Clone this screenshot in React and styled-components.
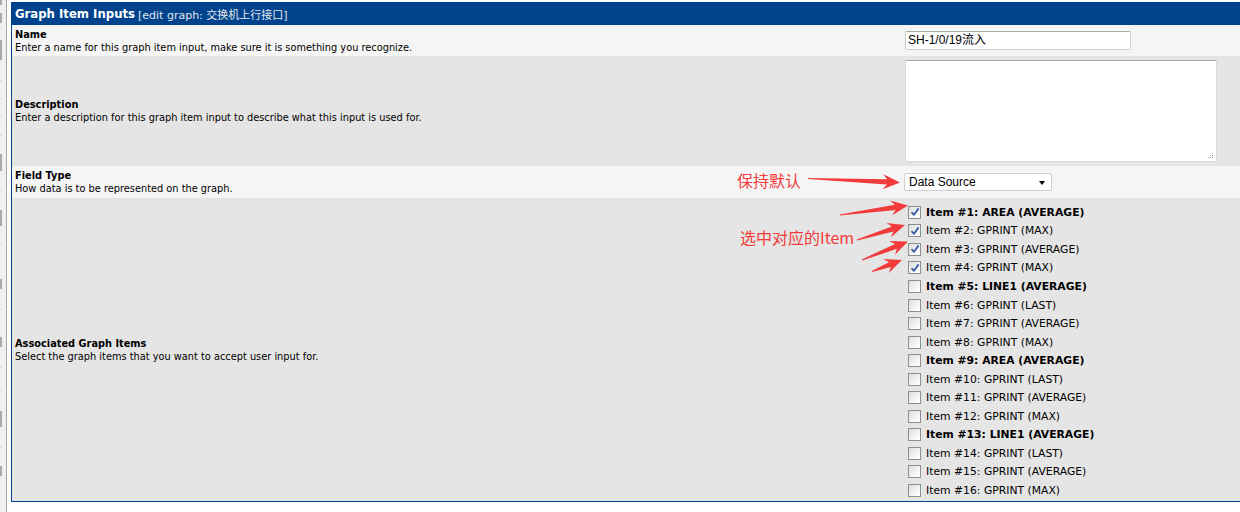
import React from "react";
import styled, { createGlobalStyle } from "styled-components";

const Global = createGlobalStyle`
  html, body { margin: 0; padding: 0; background: #ffffff; }
  body { font-family: "DejaVu Sans", "Noto Sans CJK SC", sans-serif; overflow: hidden; }
`;

const Page = styled.div`
  position: relative;
  display: flex;
  width: 1240px;
  height: 512px;
  overflow: hidden;
`;

const Sidebar = styled.div`
  width: 6px;
  flex: none;
  background: #f0f0f0;
  border-right: 1px solid #a6a6a6;
  display: flex;
  flex-direction: column;
`;

const Mark = styled.div`
  width: ${(p) => (p.$thick ? 2 : 1)}px;
  height: ${(p) => p.$h}px;
  margin-top: ${(p) => p.$gap}px;
  background: ${(p) => (p.$thick ? "#a9a9a9" : "#c4c4c4")};
`;

const Main = styled.div`
  flex: 1;
  padding: 2px 0 0 4px;
  min-width: 0;
`;

const Table = styled.div`
  border: 1px solid #00438c;
  border-right: none;
  width: calc(100% + 40px);
`;

const Header = styled.div`
  height: 22px;
  background: #00438c;
  display: flex;
  align-items: center;
  padding-left: 3px;
  font-size: 11.7px;
  color: #ffffff;
  white-space: nowrap;
`;

const HeaderTitle = styled.span`
  font-weight: bold;
`;

const HeaderSub = styled.span`
  color: #e2e6ee;
  margin-left: 3px;
  font-size: 11px;
`;

const Row = styled.div`
  display: flex;
  align-items: stretch;
  background: ${(p) => (p.$alt ? "#e5e5e5" : "#f5f5f5")};
  height: ${(p) => p.$h}px;
`;

const LeftCell = styled.div`
  width: 886px;
  flex: none;
  padding-left: 3px;
  display: flex;
  flex-direction: column;
  justify-content: center;
  font-size: 9.8px;
  line-height: 13px;
  color: #000;
`;

const FieldTitle = styled.div`
  font-weight: bold;
`;

const FieldDesc = styled.div``;

const RightCell = styled.div`
  flex: 1;
  display: flex;
  flex-direction: column;
  justify-content: ${(p) => (p.$top ? "flex-start" : "center")};
  padding-left: ${(p) => p.$pl ?? 4}px;
  padding-top: ${(p) => p.$pt ?? 0}px;
`;

const TextInput = styled.div`
  width: 222px;
  height: 17px;
  border: 1px solid #c9ced6;
  border-top-color: #a9a9a9;
  border-radius: 2px;
  background: #fff;
  font-family: "Liberation Sans", "Noto Sans CJK SC", sans-serif;
  font-size: 12px;
  line-height: 17px;
  padding-left: 2px;
  box-sizing: content-box;
  color: #000;
`;

const TextArea = styled.div`
  position: relative;
  width: 310px;
  height: 100px;
  border: 1px solid #d3d7de;
  border-top-color: #ababab;
  border-radius: 2px;
  background: #fff;
`;

const Grip = styled.svg`
  position: absolute;
  right: 2px;
  bottom: 2px;
`;

const SelectBox = styled.div`
  margin-left: -1px;
  width: 136px;
  height: 16px;
  border: 1px solid #cfcfcf;
  border-radius: 2px;
  background: #fff;
  display: flex;
  align-items: center;
  justify-content: space-between;
  padding-left: 4px;
  padding-right: 6px;
  box-sizing: content-box;
  margin-right: auto;
  font-family: "Liberation Sans", sans-serif;
  font-size: 12px;
  color: #000;
`;

const Caret = styled.span`
  width: 0;
  height: 0;
  border-left: 3.5px solid transparent;
  border-right: 3.5px solid transparent;
  border-top: 4px solid #000;
  margin-top: 2px;
`;

const ItemList = styled.div`
  display: flex;
  flex-direction: column;
`;

const Item = styled.div`
  display: flex;
  align-items: center;
  height: 18.55px;
  font-size: 10.8px;
  color: #000;
  white-space: nowrap;
`;

const Box = styled.span`
  width: 11px;
  height: 11px;
  border: 1px solid #8e8f8f;
  background: linear-gradient(135deg, #dcdcdc 0%, #f4f4f4 60%, #ffffff 100%);
  margin-left: 7px;
  display: flex;
  align-items: center;
  justify-content: center;
  flex: none;
`;

const ItemLabel = styled.span`
  margin-left: 5px;
  font-weight: ${(p) => (p.$bold ? "bold" : "normal")};
`;

const Overlay = styled.svg`
  position: absolute;
  left: 0;
  top: 0;
  pointer-events: none;
`;

const Note = styled.div`
  position: absolute;
  left: ${(p) => p.$x}px;
  top: ${(p) => p.$y}px;
  font-family: "Noto Sans CJK SC", "DejaVu Sans", sans-serif;
  font-size: 16px;
  color: #f23b3b;
  white-space: nowrap;
  line-height: 1;
`;

const marks = [
  { gap: 0, h: 5, thick: true },
  { gap: 8, h: 10, thick: true },
  { gap: 5, h: 1 },
  { gap: 11, h: 20, thick: true },
  { gap: 20, h: 1 },
  { gap: 17, h: 1 },
  { gap: 17, h: 1 },
  { gap: 18, h: 1 },
  { gap: 18, h: 17, thick: true },
  { gap: 19, h: 1 },
  { gap: 19, h: 16, thick: true },
  { gap: 18, h: 1 },
  { gap: 34, h: 10, thick: true },
  { gap: 20, h: 1 },
  { gap: 27, h: 10, thick: true },
  { gap: 20, h: 1 },
  { gap: 22, h: 1 },
  { gap: 20, h: 16, thick: true },
  { gap: 20, h: 1 },
  { gap: 18, h: 10, thick: true },
];

const items = [
  { n: 1, t: "AREA (AVERAGE)", b: true, c: true },
  { n: 2, t: "GPRINT (MAX)", c: true },
  { n: 3, t: "GPRINT (AVERAGE)", c: true },
  { n: 4, t: "GPRINT (MAX)", c: true },
  { n: 5, t: "LINE1 (AVERAGE)", b: true },
  { n: 6, t: "GPRINT (LAST)" },
  { n: 7, t: "GPRINT (AVERAGE)" },
  { n: 8, t: "GPRINT (MAX)" },
  { n: 9, t: "AREA (AVERAGE)", b: true },
  { n: 10, t: "GPRINT (LAST)" },
  { n: 11, t: "GPRINT (AVERAGE)" },
  { n: 12, t: "GPRINT (MAX)" },
  { n: 13, t: "LINE1 (AVERAGE)", b: true },
  { n: 14, t: "GPRINT (LAST)" },
  { n: 15, t: "GPRINT (AVERAGE)" },
  { n: 16, t: "GPRINT (MAX)" },
];

function arrowPoints(x1, y1, x2, y2) {
  const dx = x2 - x1;
  const dy = y2 - y1;
  const len = Math.hypot(dx, dy);
  const ux = dx / len;
  const uy = dy / len;
  const px = -uy;
  const py = ux;
  const headL = 17;
  const headW = 7.5;
  const neckW = 2.6;
  const tailW = 0.6;
  const bx = x2 - ux * headL;
  const by = y2 - uy * headL;
  const nx = x2 - ux * (headL - 4);
  const ny = y2 - uy * (headL - 4);
  const pts = [
    [x1 + px * tailW, y1 + py * tailW],
    [nx + px * neckW, ny + py * neckW],
    [bx + px * headW, by + py * headW],
    [x2, y2],
    [bx - px * headW, by - py * headW],
    [nx - px * neckW, ny - py * neckW],
    [x1 - px * tailW, y1 - py * tailW],
  ];
  return pts.map((p) => p.map((v) => v.toFixed(1)).join(",")).join(" ");
}

const arrows = [
  [808, 178.5, 900, 182.5],
  [840, 215, 908, 205.5],
  [857, 240, 905, 225],
  [862, 260, 908, 241.5],
  [872, 271.5, 902, 260],
];

function Check() {
  return (
    <svg width="10" height="10" viewBox="0 0 10 10">
      <path d="M1.5 5.2 L4 7.8 L8.6 1.4" fill="none" stroke="#3b5aa8" strokeWidth="1.8" strokeLinejoin="round" />
    </svg>
  );
}

export default function App() {
  return (
    <>
      <Global />
      <Page>
        <Sidebar>
          {marks.map((m, i) => (
            <Mark key={i} $gap={m.gap} $h={m.h} $thick={m.thick} />
          ))}
        </Sidebar>
        <Main>
          <Table>
            <Header>
              <HeaderTitle>Graph Item Inputs</HeaderTitle>
              <HeaderSub>[edit graph: 交换机上行接口]</HeaderSub>
            </Header>
            <Row $h={31}>
              <LeftCell>
                <FieldTitle>Name</FieldTitle>
                <FieldDesc>Enter a name for this graph item input, make sure it is something you recognize.</FieldDesc>
              </LeftCell>
              <RightCell>
                <TextInput>SH-1/0/19流入</TextInput>
              </RightCell>
            </Row>
            <Row $h={110} $alt>
              <LeftCell>
                <FieldTitle>Description</FieldTitle>
                <FieldDesc>Enter a description for this graph item input to describe what this input is used for.</FieldDesc>
              </LeftCell>
              <RightCell>
                <TextArea>
                  <Grip width="7" height="7" viewBox="0 0 7 7">
                    <rect x="5" y="1" width="1" height="1" fill="#9a9a9a" />
                    <rect x="3" y="3" width="1" height="1" fill="#9a9a9a" />
                    <rect x="5" y="3" width="1" height="1" fill="#9a9a9a" />
                    <rect x="1" y="5" width="1" height="1" fill="#9a9a9a" />
                    <rect x="3" y="5" width="1" height="1" fill="#9a9a9a" />
                    <rect x="5" y="5" width="1" height="1" fill="#9a9a9a" />
                  </Grip>
                </TextArea>
              </RightCell>
            </Row>
            <Row $h={32}>
              <LeftCell>
                <FieldTitle>Field Type</FieldTitle>
                <FieldDesc>How data is to be represented on the graph.</FieldDesc>
              </LeftCell>
              <RightCell>
                <SelectBox>
                  <span>Data Source</span>
                  <Caret />
                </SelectBox>
              </RightCell>
            </Row>
            <Row $h={303} $alt>
              <LeftCell>
                <FieldTitle>Associated Graph Items</FieldTitle>
                <FieldDesc>Select the graph items that you want to accept user input for.</FieldDesc>
              </LeftCell>
              <RightCell $top $pl={0} $pt={5}>
                <ItemList>
                  {items.map((it) => (
                    <Item key={it.n}>
                      <Box>{it.c && <Check />}</Box>
                      <ItemLabel $bold={it.b}>
                        Item #{it.n}: {it.t}
                      </ItemLabel>
                    </Item>
                  ))}
                </ItemList>
              </RightCell>
            </Row>
          </Table>
        </Main>
        <Overlay width="1240" height="512">
          {arrows.map((a, i) => (
            <polygon key={i} points={arrowPoints(...a)} fill="#f23b3b" />
          ))}
        </Overlay>
        <Note $x={737} $y={172}>保持默认</Note>
        <Note $x={740} $y={229}>选中对应的Item</Note>
      </Page>
    </>
  );
}
